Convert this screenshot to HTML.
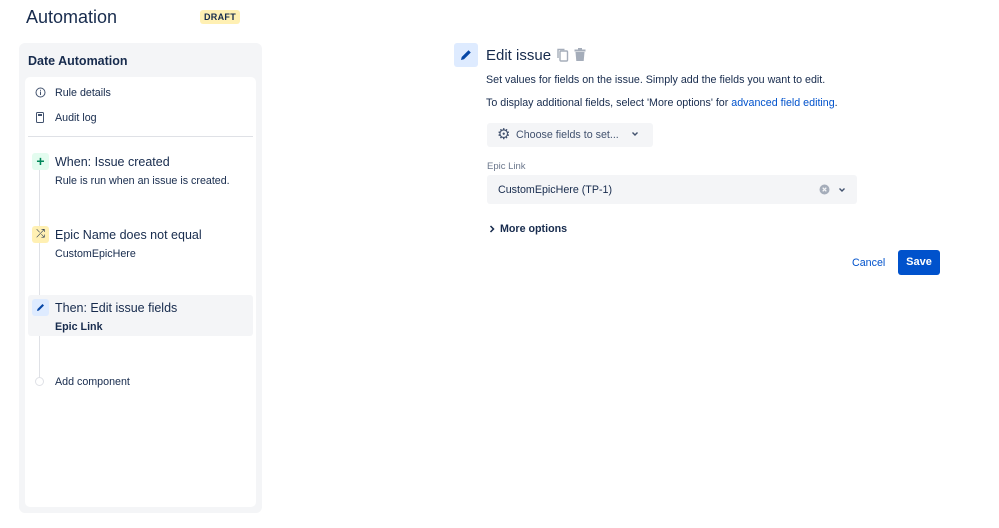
<!DOCTYPE html>
<html><head><meta charset="utf-8"><style>
*{box-sizing:border-box;margin:0;padding:0}
body{width:999px;height:528px;background:#fff;font-family:"Liberation Sans",sans-serif;color:#172b4d;position:relative;overflow:hidden}
.abs{position:absolute}
.t{font-size:10.7px;white-space:nowrap}
</style></head><body>
<div class="abs" style="left:26px;top:7px;font-size:18px;color:#172b4d">Automation</div>
<div class="abs" style="left:200px;top:10px;background:#fff0b3;border-radius:3px;font-size:9px;font-weight:bold;padding:2px 4px;color:#172b4d;letter-spacing:.3px">DRAFT</div>

<div class="abs" style="left:19px;top:43px;width:243px;height:470px;background:#f4f5f7;border-radius:6px"></div>
<div class="abs" style="left:28px;top:54px;font-size:12.5px;font-weight:bold">Date Automation</div>
<div class="abs" style="left:25px;top:77px;width:231px;height:430px;background:#fff;border-radius:5px"></div>

<svg class="abs" style="left:35px;top:87px" width="11" height="11" viewBox="0 0 11 11"><circle cx="5.5" cy="5.5" r="4.5" fill="none" stroke="#42526e" stroke-width="1"/><rect x="5" y="4.5" width="1" height="3.5" fill="#42526e"/><rect x="5" y="2.8" width="1" height="1" fill="#42526e"/></svg>
<div class="abs t" style="left:55px;top:87px">Rule details</div>
<svg class="abs" style="left:36px;top:112px" width="9" height="11" viewBox="0 0 9 11"><rect x="0.5" y="0.5" width="7" height="10" rx="1" fill="none" stroke="#42526e"/><rect x="2" y="2" width="4" height="2" fill="#42526e"/></svg>
<div class="abs t" style="left:55px;top:112px">Audit log</div>
<div class="abs" style="left:28px;top:136px;width:225px;height:1px;background:#dfe1e6"></div>

<div class="abs" style="left:39px;top:162px;width:1px;height:222px;background:#dfe1e6"></div>
<div class="abs" style="left:32px;top:153px;width:17px;height:17px;background:#e3fcef;border-radius:3px;color:#00875a;font-size:14px;text-align:center;line-height:16px;font-weight:bold">+</div>
<div class="abs" style="left:55px;top:155px;font-size:12.5px">When: Issue created</div>
<div class="abs t" style="left:55px;top:175px">Rule is run when an issue is created.</div>

<div class="abs" style="left:32px;top:226px;width:17px;height:17px;background:#fff0b3;border-radius:3px;font-size:11px;text-align:center;line-height:17px">⤮</div>
<div class="abs" style="left:55px;top:228px;font-size:12.5px">Epic Name does not equal</div>
<div class="abs t" style="left:55px;top:248px">CustomEpicHere</div>

<div class="abs" style="left:28px;top:295px;width:225px;height:41px;background:#f4f5f7;border-radius:3px"></div>
<div class="abs" style="left:32px;top:299px;width:17px;height:17px;background:#deebff;border-radius:3px"></div>
<svg class="abs" style="left:35px;top:302px" width="11" height="11" viewBox="0 0 11 11"><path d="M2 9 L2.5 7 L7.5 2 L9 3.5 L4 8.5 Z" fill="#0747a6"/></svg>
<div class="abs" style="left:55px;top:301px;font-size:12.5px">Then: Edit issue fields</div>
<div class="abs t" style="left:55px;top:321px;font-weight:bold">Epic Link</div>

<div class="abs" style="left:35px;top:377px;width:9px;height:9px;border:1px solid #dfe1e6;border-radius:50%;background:#fff"></div>
<div class="abs t" style="left:55px;top:376px">Add component</div>

<div class="abs" style="left:454px;top:43px;width:24px;height:24px;background:#deebff;border-radius:3px"></div>
<svg class="abs" style="left:459px;top:48px" width="14" height="14" viewBox="0 0 14 14"><path d="M2 12 L2.7 9 L9.5 2.2 L11.8 4.5 L5 11.3 Z" fill="#0747a6"/></svg>
<div class="abs" style="left:486px;top:47px;font-size:15px">Edit issue</div>
<svg class="abs" style="left:557px;top:48px" width="12" height="14" viewBox="0 0 12 14"><rect x="3" y="3" width="7.5" height="10" rx="1" fill="none" stroke="#a5adba" stroke-width="1.4"/><path d="M1 10 V1.5 H7.5" fill="none" stroke="#a5adba" stroke-width="1.4"/></svg>
<svg class="abs" style="left:574px;top:48px" width="12" height="13" viewBox="0 0 12 13"><rect x="0.5" y="1.5" width="11" height="2" fill="#a5adba"/><rect x="4" y="0" width="4" height="2" fill="#a5adba"/><path d="M1.5 4 H10.5 L9.7 13 H2.3 Z" fill="#a5adba"/></svg>

<div class="abs t" style="left:486px;top:74px">Set values for fields on the issue. Simply add the fields you want to edit.</div>
<div class="abs t" style="left:486px;top:97px">To display additional fields, select 'More options' for <span style="color:#0052cc">advanced field editing</span>.</div>

<div class="abs" style="left:487px;top:123px;width:166px;height:24px;background:#f4f5f7;border-radius:3px"></div>
<div class="abs" style="left:497px;top:127px;font-size:15px;line-height:15px;color:#42526e">⚙</div>
<div class="abs t" style="left:516px;top:129px;color:#42526e">Choose fields to set...</div>
<svg class="abs" style="left:631px;top:131px" width="8" height="6" viewBox="0 0 8 6"><path d="M1.5 1.5 L4 4 L6.5 1.5" fill="none" stroke="#42526e" stroke-width="1.4"/></svg>

<div class="abs" style="left:487px;top:161px;font-size:9.5px;color:#6b778c">Epic Link</div>
<div class="abs" style="left:487px;top:175px;width:370px;height:29px;background:#f4f5f7;border-radius:3px"></div>
<div class="abs t" style="left:498px;top:184px">CustomEpicHere (TP-1)</div>
<svg class="abs" style="left:819px;top:184px" width="11" height="11" viewBox="0 0 11 11"><circle cx="5.5" cy="5.5" r="5" fill="#a5adba"/><path d="M3.7 3.7 L7.3 7.3 M7.3 3.7 L3.7 7.3" stroke="#f4f5f7" stroke-width="1.3"/></svg>
<svg class="abs" style="left:838px;top:187px" width="8" height="6" viewBox="0 0 8 6"><path d="M1.5 1.5 L4 4 L6.5 1.5" fill="none" stroke="#42526e" stroke-width="1.4"/></svg>

<svg class="abs" style="left:489px;top:225px" width="6" height="8" viewBox="0 0 6 8"><path d="M1.5 1 L4.5 4 L1.5 7" fill="none" stroke="#172b4d" stroke-width="1.5"/></svg>
<div class="abs t" style="left:500px;top:223px;font-weight:bold;color:#172b4d">More options</div>

<div class="abs t" style="left:852px;top:257px;color:#0052cc">Cancel</div>
<div class="abs" style="left:898px;top:250px;width:42px;height:25px;background:#0052cc;border-radius:3px;color:#fff;font-size:11px;font-weight:bold;text-align:center;line-height:25px">Save</div>
</body></html>
